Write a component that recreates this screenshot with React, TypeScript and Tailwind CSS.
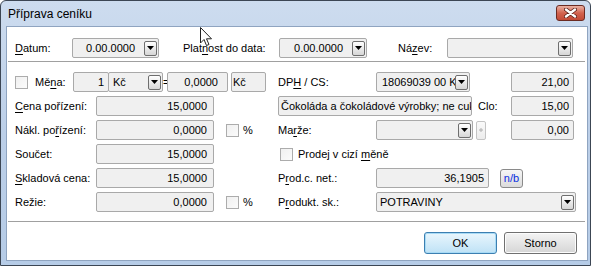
import React from "react";

const FONT = "font-['Liberation_Sans',Arial,sans-serif]";

function DropBtn({ className = "" }: { className?: string }) {
  return (
    <div
      className={`w-[13px] h-[15px] shrink-0 rounded-[2px] border border-[#6e6e6e] bg-gradient-to-b from-[#ffffff] to-[#d6d6d6] flex items-center justify-center ${className}`}
    >
      <svg width="7" height="4" viewBox="0 0 7 4">
        <polygon points="0,0 7,0 3.5,4" fill="#000" />
      </svg>
    </div>
  );
}

function Lbl({ className = "", children }: { className?: string; children: React.ReactNode }) {
  return <div className={`shrink-0 whitespace-nowrap text-[11px] text-[#000] leading-[13px] ${className}`}>{children}</div>;
}

function Box({ className = "", children }: { className?: string; children?: React.ReactNode }) {
  return (
    <div
      className={`h-[20px] shrink-0 rounded-[2px] border border-[#a9a9a9] bg-[#f0f0f0] flex items-center overflow-hidden whitespace-nowrap text-[11px] text-black ${className}`}
    >
      {children}
    </div>
  );
}

function Combo({ className = "", text = "", textClass = "pl-[4px]" }: { className?: string; text?: string; textClass?: string }) {
  return (
    <Box className={className}>
      <span className={`flex-1 overflow-hidden whitespace-nowrap ${textClass}`}>{text}</span>
      <DropBtn className="mr-[1px]" />
    </Box>
  );
}

function DateBox({ className = "" }: { className?: string }) {
  return (
    <Box className={className}>
      <span className="flex-1 text-right pr-[9px]">0.00.0000</span>
      <DropBtn className="mr-[1px]" />
    </Box>
  );
}

function Check({ className = "" }: { className?: string }) {
  return <div className={`w-[13px] h-[13px] shrink-0 border border-[#acacac] bg-gradient-to-br from-[#f0f0f0] to-[#fbfbfb] ${className}`} />;
}

function U({ children }: { children: React.ReactNode }) {
  return <span className="underline underline-offset-[2px]">{children}</span>;
}

export default function App() {
  return (
    <div className={`${FONT} w-[591px] h-[266px] bg-white`}>
      <div className="relative w-[591px] h-[266px] rounded-t-[6px] border border-[#3c4654] bg-gradient-to-b from-[#cddcef] via-[#bccfe8] to-[#b6cce7] flex flex-col overflow-hidden">
        {/* title bar */}
        <div className="h-[25px] shrink-0 flex items-start justify-between">
          <div className="mt-[6px] ml-[7px] text-[12px] leading-[14px] text-black">Příprava ceníku</div>
          <div className="mt-[4px] mr-[5px] w-[29px] h-[16px] rounded-[3px] border border-[#6b2b22] bg-gradient-to-b from-[#e9b1a3] via-[#d2634f] to-[#c24a36] flex items-center justify-center">
            <svg width="13" height="10" viewBox="0 0 13 10">
              <path d="M2 1.5 L11 8.5 M11 1.5 L2 8.5" stroke="#5a2019" strokeWidth="4" strokeLinecap="round" />
              <path d="M2 1.5 L11 8.5 M11 1.5 L2 8.5" stroke="#ffffff" strokeWidth="2.4" strokeLinecap="round" />
            </svg>
          </div>
        </div>

        {/* client area */}
        <div className="flex-1 ml-[5px] mr-[2px] mb-[4px] border border-[#8fa4c0] bg-white flex flex-col">
          {/* top row */}
          <div className="flex items-center h-[20px] mt-[11px] pl-[8px]">
            <Lbl className="w-[57px]"><U>D</U>atum:</Lbl>
            <DateBox className="w-[87px]" />
            <Lbl className="ml-[24px] w-[96px]">Plat<U>n</U>ost do data:</Lbl>
            <DateBox className="w-[88px]" />
            <Lbl className="ml-[31px] w-[49px]">Ná<U>z</U>ev:</Lbl>
            <Combo className="w-[126px]" />
          </div>

          <div className="mt-[3px] ml-[1px] mr-[2px] h-px bg-[#a0a0a0]" />

          {/* main rows */}
          <div className="mt-[10px] flex flex-col gap-[4px] pl-[8px]">
            {/* Měna */}
            <div className="flex items-center h-[20px]">
              <div className="w-[263px] shrink-0 flex items-center">
                <Check />
                <Lbl className="ml-[7px] w-[38px]">Mě<U>n</U>a:</Lbl>
                <Box className="w-[36px] justify-end pr-[4px]">1</Box>
                <Combo className="w-[55px] -ml-px" text="Kč" textClass="pl-[4px]" />
                <div className="w-[4px] text-[11px] text-center leading-[13px]">=</div>
                <Box className="w-[61px] justify-end pr-[9px]">0,0000</Box>
                <Box className="ml-[3px] w-[35px] pl-[1px]">Kč</Box>
              </div>
              <Lbl className="w-[98px]">DP<U>H</U> / CS:</Lbl>
              <Box className="w-[94px]">
                <span className="flex-1 overflow-hidden whitespace-nowrap pl-[5px] pr-[3px]">18069039 00 K</span>
                <DropBtn className="mr-[1px]" />
              </Box>
              <Box className="ml-[41px] w-[63px] justify-end pr-[4px]">21,00</Box>
            </div>

            {/* Cena pořízení */}
            <div className="flex items-center h-[20px]">
              <div className="w-[263px] shrink-0 flex items-center">
                <Lbl className="w-[81px]"><U>C</U>ena pořízení:</Lbl>
                <Box className="w-[118px] justify-end pr-[6px]">15,0000</Box>
              </div>
              <Box className="w-[194px] pl-[2px]">
                <span className="overflow-hidden whitespace-nowrap">Čokoláda a čokoládové výrobky; ne cuk</span>
              </Box>
              <Lbl className="ml-[6px] w-[33px]">Clo:</Lbl>
              <Box className="w-[63px] justify-end pr-[4px]">15,00</Box>
            </div>

            {/* Nákl. pořízení */}
            <div className="flex items-center h-[20px]">
              <div className="w-[263px] shrink-0 flex items-center">
                <Lbl className="w-[81px]">Nákl. po<U>ř</U>ízení:</Lbl>
                <Box className="w-[118px] justify-end pr-[6px]">0,0000</Box>
                <Check className="ml-[12px]" />
                <Lbl className="ml-[4px]">%</Lbl>
              </div>
              <Lbl className="w-[98px]">Ma<U>r</U>že:</Lbl>
              <Combo className="w-[97px]" />
              <div className="ml-[3px] w-[10px] h-[19px] rounded-[2px] border border-[#c4c4c4] bg-gradient-to-b from-[#fafafa] to-[#ececec] flex items-center justify-center">
                <svg width="4" height="4" viewBox="0 0 4 4">
                  <path d="M2 0 V4 M0 2 H4" stroke="#b0b0b0" strokeWidth="1" />
                </svg>
              </div>
              <Box className="ml-[25px] w-[63px] justify-end pr-[4px]">0,00</Box>
            </div>

            {/* Součet */}
            <div className="flex items-center h-[20px]">
              <div className="w-[263px] shrink-0 flex items-center">
                <Lbl className="w-[81px]">Součet:</Lbl>
                <Box className="w-[118px] justify-end pr-[6px]">15,0000</Box>
              </div>
              <Check className="ml-[2px]" />
              <Lbl className="ml-[5px]">Prodej v cizí <U>m</U>ěně</Lbl>
            </div>

            {/* Skladová cena */}
            <div className="flex items-center h-[20px]">
              <div className="w-[263px] shrink-0 flex items-center">
                <Lbl className="w-[81px]"><U>S</U>kladová cena:</Lbl>
                <Box className="w-[118px] justify-end pr-[6px]">15,0000</Box>
              </div>
              <Lbl className="w-[98px]">P<U>r</U>od.c. net.:</Lbl>
              <Box className="w-[113px] justify-end pr-[4px]">36,1905</Box>
              <div className="ml-[11px] w-[23px] h-[19px] rounded-[3px] border border-[#8a8a8a] bg-gradient-to-b from-[#f6f6f6] to-[#dcdcdc] flex items-center justify-center text-[11px] text-[#0a2ee0]">
                n/b
              </div>
            </div>

            {/* Režie */}
            <div className="flex items-center h-[20px]">
              <div className="w-[263px] shrink-0 flex items-center">
                <Lbl className="w-[81px]">Režie:</Lbl>
                <Box className="w-[118px] justify-end pr-[6px]">0,0000</Box>
                <Check className="ml-[12px]" />
                <Lbl className="ml-[4px]">%</Lbl>
              </div>
              <Lbl className="w-[98px]">P<U>r</U>odukt. sk.:</Lbl>
              <Combo className="w-[200px]" text="POTRAVINY" textClass="pl-[3px]" />
            </div>
          </div>

          <div className="mt-[9px] ml-[1px] mr-[2px] h-px bg-[#a0a0a0]" />

          {/* buttons */}
          <div className="mt-[10px] flex justify-end gap-[7px] pr-[10px]">
            <div className="w-[73px] h-[22px] rounded-[3px] border border-[#3c7fb1] bg-gradient-to-b from-[#e9f6fd] to-[#bfe2f6] shadow-[inset_0_0_0_1px_#a8dbf6] flex items-center justify-center text-[11px] text-black">
              OK
            </div>
            <div className="w-[73px] h-[22px] rounded-[3px] border border-[#707070] bg-gradient-to-b from-[#f4f4f4] to-[#d6d6d6] shadow-[inset_0_0_0_1px_#fcfcfc] flex items-center justify-center text-[11px] text-black">
              Storno
            </div>
          </div>
        </div>

        {/* mouse cursor */}
        <svg className="absolute left-[199px] top-[26px]" width="13" height="20" viewBox="0 0 13 20">
          <path d="M0.5 0.5 V16 L4 12.5 L6.5 18.5 L9 17.5 L6.5 11.8 H11.5 Z" fill="#fff" stroke="#222" strokeWidth="1" strokeLinejoin="miter" />
        </svg>
      </div>
    </div>
  );
}
